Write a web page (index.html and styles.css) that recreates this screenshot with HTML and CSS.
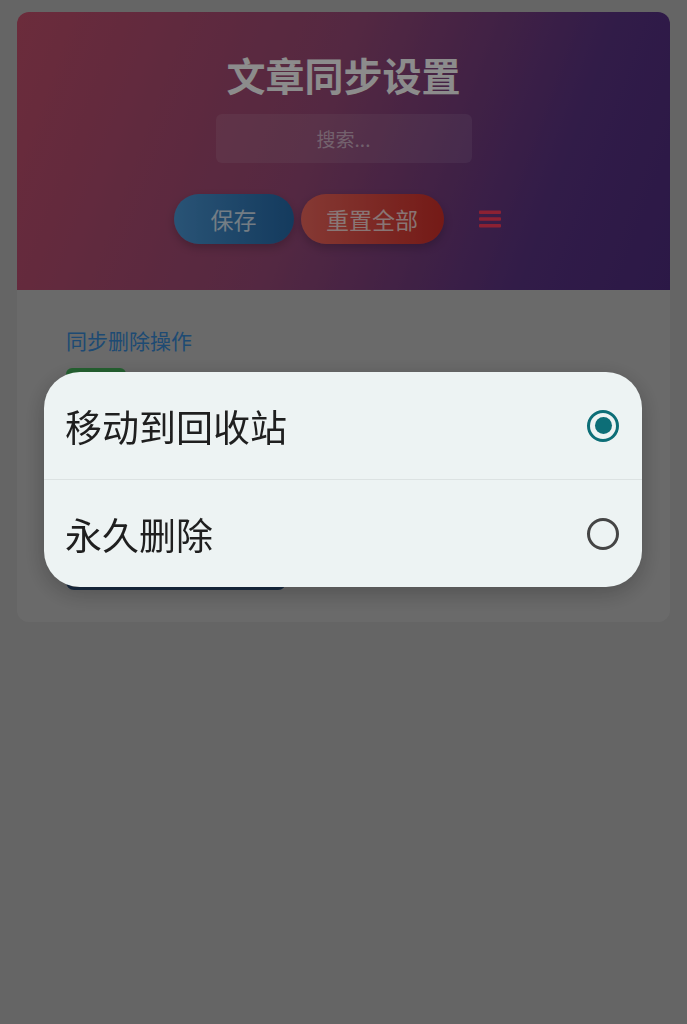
FILE: index.html
```html
<!DOCTYPE html>
<html lang="zh-CN">
<head>
  <meta charset="UTF-8">
  <meta name="viewport" content="width=device-width, initial-scale=1.0">
  <title>文章同步设置</title>
  <link rel="stylesheet" href="styles.css">
</head>
<body>

  <div class="card">
    <div class="header">
      <h1 class="title">文章同步设置</h1>
      <div class="search-box">
        <input type="text" placeholder="搜索...">
      </div>
      <div class="actions">
        <button class="btn btn-save">保存</button>
        <button class="btn btn-reset">重置全部</button>
        <button class="btn-menu" aria-label="菜单">
          <svg width="22" height="20" viewBox="0 0 22 20">
            <rect x="0" y="1.5" width="22" height="3.5" rx="1"/>
            <rect x="0" y="8.3" width="22" height="3.5" rx="1"/>
            <rect x="0" y="15" width="22" height="3.5" rx="1"/>
          </svg>
        </button>
      </div>
    </div>

    <div class="content">
      <div class="field-label">同步删除操作</div>
      <div class="field">
        <span class="field-tag"></span>
        <div class="field-select"></div>
      </div>
    </div>
  </div>

  <!-- native choice dialog -->
  <div class="backdrop"></div>
  <div class="dialog">
    <div class="option">
      <span>移动到回收站</span>
      <span class="radio checked"></span>
    </div>
    <div class="option">
      <span>永久删除</span>
      <span class="radio"></span>
    </div>
  </div>

</body>
</html>
```

FILE: styles.css
```css
/* General Styles */
* {
  box-sizing: border-box;
  margin: 0;
  padding: 0;
}

body {
  font-family: "Noto Sans CJK SC", "Noto Sans", sans-serif;
  background-color: #b8b8b8;
  padding: 12px 17px;
  min-height: 1024px;
}

/* Card */
.card {
  background-color: #c2c2c2;
  border-radius: 12px;
  overflow: hidden;
}

/* Header */
.header {
  height: 278px;
  padding-top: 39px;
  display: flex;
  flex-direction: column;
  align-items: center;
  background: linear-gradient(110deg, #c4506c 0%, #9a4a78 45%, #5a3384 80%, #4f2d80 100%);
}

.title {
  font-size: 39px;
  font-weight: 700;
  line-height: 46px;
  color: #ffffff;
}

.search-box {
  margin-top: 17px;
  width: 256px;
  height: 49px;
  border-radius: 6px;
  background-color: rgba(255, 255, 255, 0.1);
}

.search-box input {
  width: 100%;
  height: 100%;
  border: none;
  background: transparent;
  text-align: center;
  font-family: inherit;
  font-size: 19px;
  color: #fff;
  outline: none;
}

.search-box input::placeholder {
  color: rgba(255, 255, 255, 0.55);
}

.actions {
  margin-top: 31px;
  display: flex;
  align-items: center;
  gap: 7px;
}

.btn {
  height: 50px;
  border: none;
  border-radius: 25px;
  font-family: inherit;
  font-size: 23px;
  color: rgba(255, 255, 255, 0.78);
  box-shadow: 0 4px 10px rgba(0, 0, 0, 0.2);
}

.btn-save {
  width: 120px;
  background: linear-gradient(90deg, #4b98d6, #256bab);
}

.btn-reset {
  width: 143px;
  background: linear-gradient(90deg, #f2685e, #d4302a);
}

.btn-menu {
  width: 63px;
  height: 50px;
  border: none;
  background: transparent;
  display: flex;
  align-items: center;
  justify-content: center;
  padding-left: 15px;
}

.btn-menu svg {
  fill: #ff3d5e;
}

/* Content */
.content {
  padding: 36px 49px 32px 49px;
}

.field-label {
  font-size: 21px;
  line-height: 28px;
  color: #3788d1;
}

.field {
  margin-top: 14px;
}

.field-tag {
  display: block;
  width: 60px;
  height: 30px;
  border-radius: 6px;
  background-color: #44b35a;
}

.field-select {
  margin-top: 10px;
  width: 220px;
  height: 182px;
  border: 3px solid #2d4f78;
  border-radius: 8px;
}

/* Dialog */
.backdrop {
  position: fixed;
  inset: 0;
  background-color: rgba(0, 0, 0, 0.45);
}

.dialog {
  position: fixed;
  top: 372px;
  left: 44px;
  width: 598px;
  background-color: #edf3f3;
  border-radius: 36px;
  overflow: hidden;
  box-shadow: 0 6px 24px rgba(0, 0, 0, 0.25);
}

.option {
  height: 107px;
  padding: 0 23px 0 21px;
  display: flex;
  align-items: center;
  justify-content: space-between;
  font-size: 37px;
  color: #1f1f1f;
}

.option + .option {
  border-top: 1px solid #dce2e2;
  height: 108px;
}

.radio {
  width: 32px;
  height: 32px;
  border: 3px solid #454545;
  border-radius: 50%;
  display: flex;
  align-items: center;
  justify-content: center;
}

.radio.checked {
  border-color: #0d6e77;
}

.radio.checked::after {
  content: "";
  width: 17px;
  height: 17px;
  border-radius: 50%;
  background-color: #0d6e77;
}
```
